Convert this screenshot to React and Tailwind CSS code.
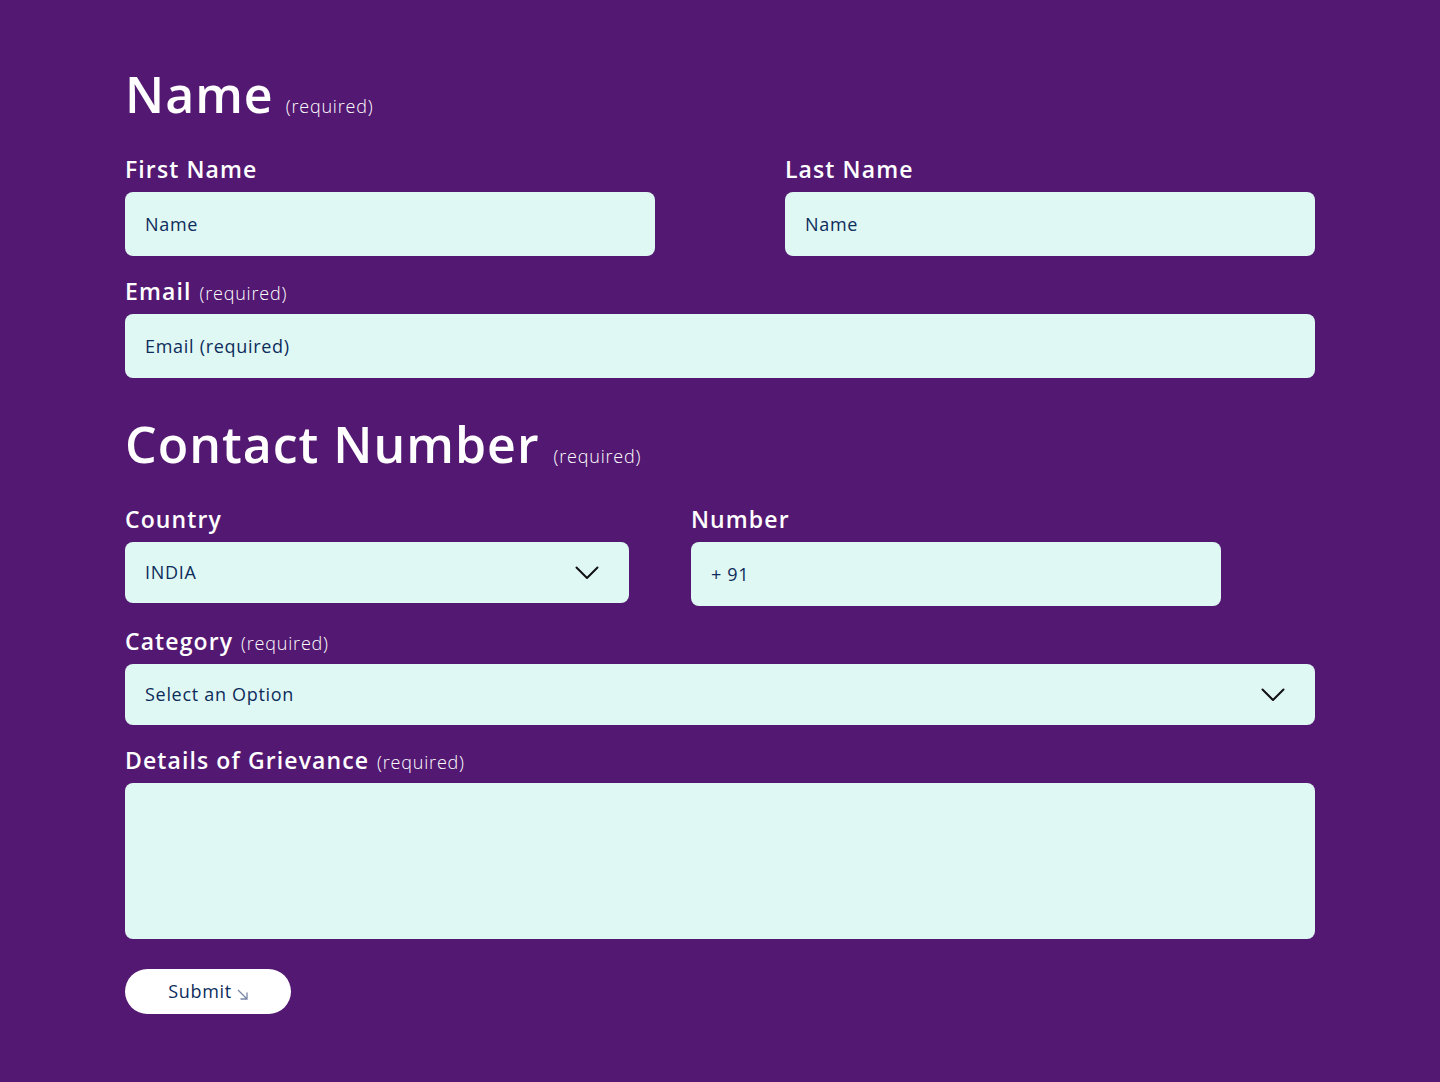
import React from 'react';

const font = { fontFamily: '"Open Sans", "Noto Sans", sans-serif' };

const Chevron = () => (
  <svg width="24" height="14" viewBox="0 0 24 14" fill="none">
    <path d="M1.5 1.5 L12 12 L22.5 1.5" stroke="#111" strokeWidth="2" strokeLinecap="round" strokeLinejoin="round" />
  </svg>
);

const ArrowDownRight = () => (
  <svg width="11" height="11" viewBox="0 0 11 11" fill="none" className="mt-[5px]">
    <path d="M1 1 L10 10 M10 3.5 V10 H3.5" stroke="#7886a6" strokeWidth="1.3" />
  </svg>
);

const Req = () => (
  <span className="font-light text-[18px] tracking-[0.8px] text-white">(required)</span>
);

const Label = ({ children, req }) => (
  <div className="flex items-baseline gap-2 h-6 mb-[11px] text-white leading-[24px]">
    <span className="text-[23px] font-semibold tracking-[1.1px]">{children}</span>
    {req && <Req />}
  </div>
);

const Input = ({ placeholder }) => (
  <div className="h-16 rounded-lg bg-[#e0f8f3] flex items-center px-5 text-[18px] tracking-[0.7px] text-[#0d2c5c]">
    {placeholder}
  </div>
);

const Select = ({ value }) => (
  <div className="h-[61px] rounded-lg bg-[#e0f8f3] flex items-center justify-between pl-5 pr-[30px] text-[18px] tracking-[0.7px] text-[#0d2c5c]">
    <span>{value}</span>
    <Chevron />
  </div>
);

export default function App() {
  return (
    <div className="min-h-[1082px] w-full bg-[#531872]" style={font}>
      <div className="w-[1190px] ml-[125px] pt-[64px]">
        <div className="flex items-baseline gap-3 h-[60px] text-white">
          <h1 className="text-[50px] font-semibold leading-[60px] tracking-[1px]">Name</h1>
          <Req />
        </div>

        <div className="grid grid-cols-2 gap-x-[130px] mt-[33px]">
          <div>
            <Label>First Name</Label>
            <Input placeholder="Name" />
          </div>
          <div>
            <Label>Last Name</Label>
            <Input placeholder="Name" />
          </div>
        </div>

        <div className="mt-[23px]">
          <Label req>Email</Label>
          <Input placeholder="Email (required)" />
        </div>

        <div className="flex items-baseline gap-[14px] h-[60px] text-white mt-[36px]">
          <h2 className="text-[50px] font-semibold leading-[60px] tracking-[1px]">Contact Number</h2>
          <Req />
        </div>

        <div className="flex items-start gap-[62px] mt-[33px]">
          <div className="w-[504px]">
            <Label>Country</Label>
            <Select value="INDIA" />
          </div>
          <div className="w-[530px]">
            <Label>Number</Label>
            <Input placeholder="+ 91" />
          </div>
        </div>

        <div className="mt-[23px]">
          <Label req>Category</Label>
          <Select value="Select an Option" />
        </div>

        <div className="mt-[23px]">
          <Label req>Details of Grievance</Label>
          <div className="h-[156px] rounded-lg bg-[#e0f8f3]" />
        </div>

        <button className="mt-[30px] w-[166px] h-[45px] rounded-full bg-white text-[#0d2c5c] text-[18px] tracking-[0.7px] flex items-center justify-center gap-[5px]">
          <span>Submit</span>
          <ArrowDownRight />
        </button>
      </div>
    </div>
  );
}
